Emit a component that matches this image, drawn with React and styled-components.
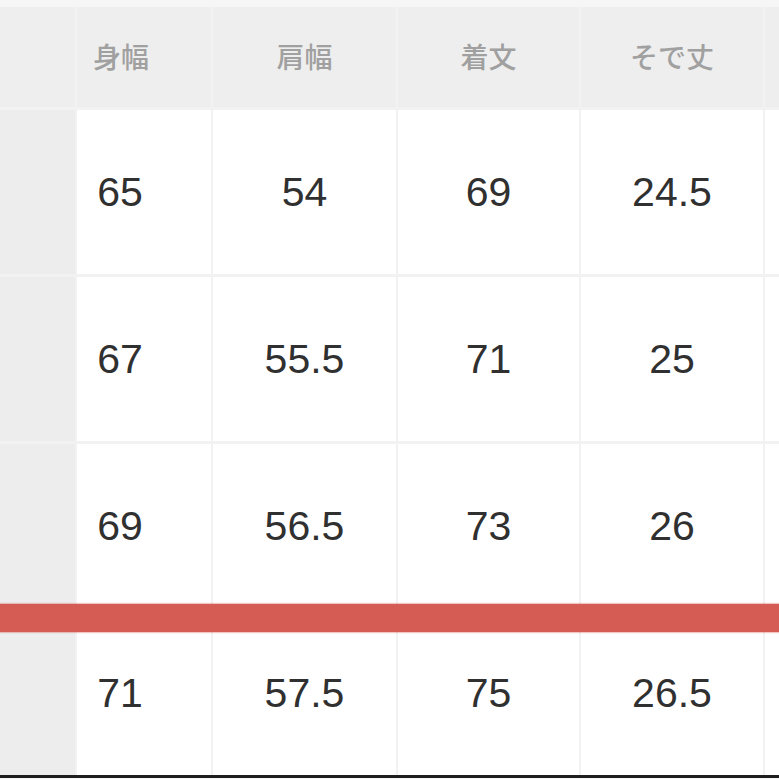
import React from 'react';
import styled, { createGlobalStyle } from 'styled-components';

const GlobalStyle = createGlobalStyle`
  html, body {
    margin: 0;
    padding: 0;
    background: #f4f4f4;
  }
  body {
    width: 779px;
    height: 779px;
    overflow: hidden;
  }
`;

const Wrapper = styled.div`
  position: relative;
  width: 779px;
  height: 779px;
  padding-top: 7px;
  box-sizing: border-box;
  background: #f6f6f6;
  overflow: hidden;
`;

const Grid = styled.div`
  display: grid;
  grid-template-columns: 75px 134px 183px 181px 182px 1fr;
  grid-template-rows: 100px repeat(4, 164px);
  column-gap: 2px;
  row-gap: 3px;
  background: #f2f2f2;
  border-bottom: 3px solid #1e1e1e;
`;

const HeadCell = styled.div`
  display: flex;
  align-items: center;
  justify-content: center;
  padding-right: ${(p) => p.$shift || 0}px;
  padding-bottom: 2px;
  background: #eeeeee;
  color: #a0a0a0;
  font-family: "Noto Sans CJK JP", "Noto Sans", sans-serif;
  font-weight: 500;
  font-size: 28px;
`;

const SideCell = styled.div`
  background: #ededed;
`;

const Cell = styled.div`
  display: flex;
  align-items: center;
  justify-content: center;
  padding-right: ${(p) => p.$shift || 0}px;
  background: #ffffff;
  color: #303030;
  font-family: "Liberation Sans", Arial, sans-serif;
  font-size: 41px;
`;

const Highlight = styled.div`
  position: absolute;
  left: 0;
  right: 0;
  top: 604px;
  height: 28px;
  background: #d45c54;
  box-shadow: 0 0 1px 1px rgba(212, 92, 84, 0.35);
`;

const heads = ['身幅', '肩幅', '着文', 'そで丈'];

const rows = [
  ['65', '54', '69', '24.5'],
  ['67', '55.5', '71', '25'],
  ['69', '56.5', '73', '26'],
  ['71', '57.5', '75', '26.5'],
];

export default function App() {
  return (
    <>
      <GlobalStyle />
      <Wrapper>
        <Grid>
          <HeadCell />
          {heads.map((h, i) => (
            <HeadCell key={h} $shift={i === 0 ? 46 : 0}>
              {h}
            </HeadCell>
          ))}
          <HeadCell />
          {rows.map((row, r) => (
            <React.Fragment key={r}>
              <SideCell />
              {row.map((v, i) => (
                <Cell key={i} $shift={i === 0 ? 48 : 0}>
                  {v}
                </Cell>
              ))}
              <Cell />
            </React.Fragment>
          ))}
        </Grid>
        <Highlight />
      </Wrapper>
    </>
  );
}
